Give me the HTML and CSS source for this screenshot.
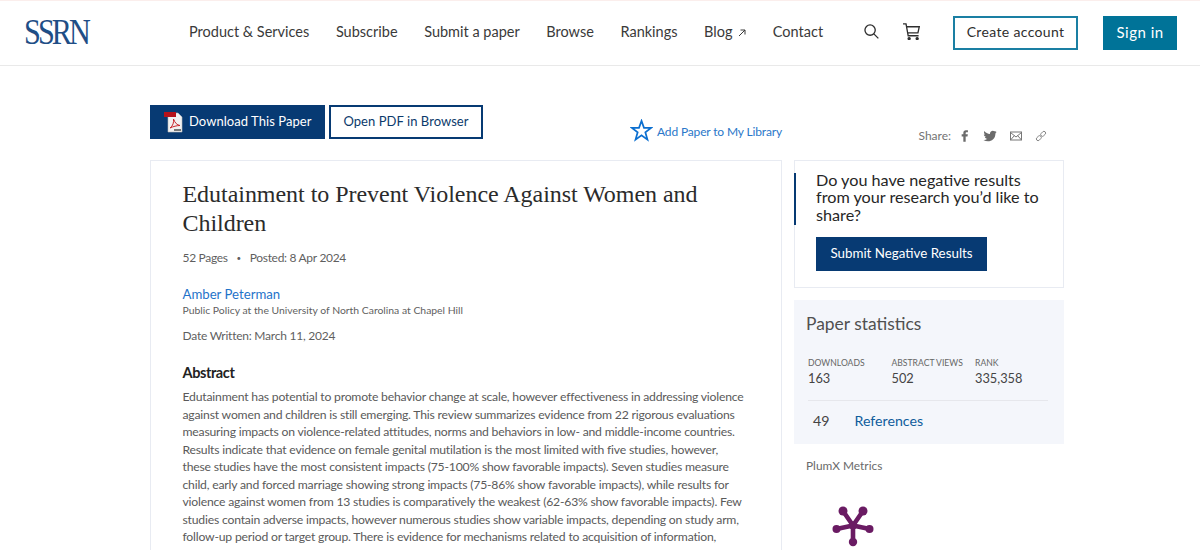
FILE: index.html
```html
<!DOCTYPE html>
<html>
	<head>
		<meta charset="UTF-8">
		<title>Edutainment to Prevent Violence Against Women and Children</title>
		<link rel="stylesheet" href="styles.css">
	</head>
	<body>
		<div class="header">
			<div class="logo"><span>SSRN</span></div>
			<div class="nav">
				<span>Product &amp; Services</span>
				<span>Subscribe</span>
				<span>Submit a paper</span>
				<span>Browse</span>
				<span>Rankings</span>
				<span>Blog <svg class="arrow" viewBox="0 0 8 8"><path d="M1 7L7 1M2.500 1H7V5.500"/></svg></span>
				<span>Contact</span>
			</div>
			<div class="tools">
				<svg class="tool search" viewBox="0 0 16 16"><circle cx="6.500" cy="6.500" r="5.500"/><path d="M10.500 10.500L15.300 15.300"/></svg>
				<svg class="tool cart" viewBox="0 0 18 18"><path d="M0 1H3.200L5.500 13.500H16.500M4 4H17.200L15.800 10.500H5.200"/><circle cx="6.500" cy="16.500" r="1.100"/><circle cx="15" cy="16.500" r="1.100"/></svg>
			</div>
			<div class="btn-create">Create account</div>
			<div class="btn-signin">Sign in</div>
		</div>

		<div class="page">
			<div class="actions">
				<div class="btn-download">
					<svg class="pdf" viewBox="0 0 20 21">
						<path d="M4 1H14L18 5V20H4Z" fill="#f2f2f2" stroke="#bbb" stroke-width=".6"/>
						<rect x="0" y="0" width="12" height="5" fill="#b5121b"/>
						<path d="M6 16C9 14 10 10 9.500 7C11 11 13 13 16 13.500C13 13.500 9 14.500 6 16Z" fill="none" stroke="#c8242b" stroke-width="1"/>
						<rect x="10" y="17" width="7" height="2" fill="#777"/>
					</svg>
					<span>Download This Paper</span>
				</div>
				<div class="btn-open">Open PDF in Browser</div>
				<div class="library">
					<svg class="star" viewBox="0 0 24 24"><path d="M12 2L14.600 9.200H22L16 13.900L18.200 21.500L12 17L5.800 21.500L8 13.900L2 9.200H9.400Z"/></svg>
					<span>Add Paper to My Library</span>
				</div>
				<div class="share">
					<span>Share:</span>
					<svg class="share-icon ico-f" viewBox="0 0 12 16"><path class="solid" d="M4 15V8.500H2V6H4V4.200C4 2 5.200 1 7 1H9.500V3.500H8C7 3.500 6.800 3.900 6.800 4.700V6H9.400L9 8.500H6.800V15Z"/></svg>
					<svg class="share-icon ico-t" viewBox="0 0 16 14"><path class="solid" d="M15.500 2.200C15 2.500 14.400 2.600 13.800 2.700C14.400 2.300 14.900 1.800 15.100 1C14.500 1.400 13.900 1.600 13.200 1.700C11.600 0 8.300 1 8 3.800C8 4.100 8 4.300 8 4.600C5.300 4.500 3 3.200 1.500 1.300C.8 2.700 1.100 4.300 2.500 5.400C2 5.400 1.500 5.200 1 5C1 6.500 2.100 7.700 3.500 8C3 8.100 2.600 8.100 2.100 8C2.500 9.200 3.600 10.100 5 10.200C3.600 11.300 2 11.800 .5 11.600C6 15 14.200 12.500 14.200 4.200C14.700 3.700 15.200 3 15.500 2.200Z"/></svg>
					<svg class="share-icon ico-m line" viewBox="0 0 12 13"><rect x=".5" y="2.500" width="11" height="8"/><path d="M.5 3L6 7.500L11.500 3M.5 10.500L4.500 6M11.500 10.500L7.500 6"/></svg>
					<svg class="share-icon ico-l line" viewBox="0 0 14 14"><rect x="1.200" y="7.500" width="6.500" height="4" rx="2" transform="rotate(-45 4.500 9.500)"/><rect x="6.300" y="2.500" width="6.500" height="4" rx="2" transform="rotate(-45 9.500 4.500)"/></svg>
				</div>
			</div>

			<div class="columns">
				<div class="paper">
					<h1>Edutainment to Prevent Violence Against Women and Children</h1>
					<p class="meta">52 Pages <i>&bull;</i> Posted: 8 Apr 2024</p>
					<a class="author">Amber Peterman</a>
					<p class="affil">Public Policy at the University of North Carolina at Chapel Hill</p>
					<p class="written">Date Written: March 11, 2024</p>
					<h3>Abstract</h3>
					<p class="abstract">Edutainment has potential to promote behavior change at scale, however effectiveness in addressing violence<br>against women and children is still emerging. This review summarizes evidence from 22 rigorous evaluations<br>measuring impacts on violence-related attitudes, norms and behaviors in low- and middle-income countries.<br>Results indicate that evidence on female genital mutilation is the most limited with five studies, however,<br>these studies have the most consistent impacts (75-100% show favorable impacts). Seven studies measure<br>child, early and forced marriage showing strong impacts (75-86% show favorable impacts), while results for<br>violence against women from 13 studies is comparatively the weakest (62-63% show favorable impacts). Few<br>studies contain adverse impacts, however numerous studies show variable impacts, depending on study arm,<br>follow-up period or target group. There is evidence for mechanisms related to acquisition of information,<br>individual attitudes/norms modification and interpersonal discussions. Few interventions measure</p>
				</div>
				<div class="side">
					<div class="promo">
						<div class="promo-bar">
							<div class="promo-text">Do you have negative results from your research you’d like to share?</div>
						</div>
						<div class="btn-submit">Submit Negative Results</div>
					</div>
					<div class="stats">
						<div class="stats-title">Paper statistics</div>
						<div class="stats-row">
							<div class="stat"><span>DOWNLOADS</span>163</div>
							<div class="stat"><span>ABSTRACT VIEWS</span>502</div>
							<div class="stat"><span>RANK</span>335,358</div>
						</div>
						<div class="refs"><b>49</b><a>References</a></div>
					</div>
					<div class="plum">PlumX Metrics</div>
					<svg class="plum-icon" viewBox="0 0 42 42">
						<path d="M21 19.500L11 5M21 19.500L31 5M21 19.500L4.500 23M21 19.500L37.500 23M21 19.500V36"/>
						<circle cx="11" cy="5" r="4.500"/><circle cx="31" cy="5" r="4.500"/><circle cx="4.500" cy="23" r="4"/><circle cx="37.500" cy="23" r="4"/><circle cx="21" cy="36" r="4.200"/><circle cx="21" cy="19.500" r="4"/>
					</svg>
				</div>
			</div>
		</div>
	</body>
</html>
```

FILE: styles.css
```css
html,body{
	height: 550px;
	overflow: hidden;
}
body{
	margin: 0;
	font-family: "Lato","Noto Sans",sans-serif;
	color: #2e2e2e;
	background-color: #fff;
}
h1,h3,p{
	margin: 0;
}
.header{
	display: flex;
	align-items: center;
	height: 64px;
	border-top: 1px solid #fbeeec;
	border-bottom: 1px solid #e9e9e9;
	padding-left: 25px;
	white-space: nowrap;
}
.logo{
	flex: none;
	width: 164px;
	font-family: "Liberation Serif",serif;
	font-size: 36px;
	letter-spacing: -3.500px;
	color: #1f4e86;
	margin-top: -2px;
}
.logo span{
	display: inline-block;
	margin-left: -1px;
	transform: scaleX(.84);
	transform-origin: left;
}
.nav{
	display: flex;
	flex: none;
	gap: 26.600px;
	margin-top: -3px;
	font-size: 14.500px;
	color: #3a3a3a;
}
.arrow{
	width: 8px;
	height: 8px;
	margin-left: 2px;
	fill: none;
	stroke: #3a3a3a;
	stroke-width: 1;
}
.tools{
	display: flex;
	flex: none;
	align-items: center;
	gap: 24px;
	margin-left: 41px;
	margin-top: -4px;
}
.tool{
	flex: none;
	fill: none;
	stroke: #2e2e2e;
	stroke-width: 1.400;
}
.search{
	width: 15px;
	height: 15px;
}
.cart{
	width: 17px;
	height: 17px;
}
.cart circle{
	fill: #2e2e2e;
}
.btn-create{
	flex: none;
	margin-left: 33px;
	width: 121px;
	height: 30px;
	line-height: 28px;
	border: 2px solid #1a7fa3;
	text-align: center;
	font-size: 14px;
	letter-spacing: .35px;
}
.btn-signin{
	flex: none;
	margin-left: 25px;
	width: 74px;
	height: 34px;
	line-height: 32px;
	background-color: #007398;
	color: #fff;
	text-align: center;
	font-size: 15px;
	letter-spacing: .5px;
}
.page{
	width: 914px;
	margin-left: 150px;
}
.actions{
	display: flex;
	align-items: flex-start;
	padding-top: 39px;
	height: 55px;
}
.btn-download{
	display: flex;
	flex: none;
	align-items: center;
	width: 175px;
	height: 34px;
	background-color: #073a73;
	color: #fff;
	font-size: 13px;
	letter-spacing: .05px;
	box-sizing: border-box;
	padding-left: 14px;
	gap: 5px;
}
.btn-download span{
	padding-bottom: 2px;
}
.pdf{
	flex: none;
	width: 20px;
	height: 21px;
}
.btn-open{
	flex: none;
	margin-left: 4px;
	width: 154px;
	height: 34px;
	line-height: 29px;
	box-sizing: border-box;
	border: 2px solid #073a73;
	color: #0c3a6b;
	text-align: center;
	font-size: 13px;
	letter-spacing: .05px;
}
.library{
	display: flex;
	flex: none;
	align-items: center;
	gap: 4px;
	margin-left: 147px;
	margin-top: 14px;
	color: #2a77c9;
	font-size: 12px;
	letter-spacing: -.15px;
	white-space: nowrap;
}
.library span{
	padding-top: 2px;
}
.star{
	flex: none;
	width: 23px;
	height: 23px;
	fill: none;
	stroke: #0b6fd0;
	stroke-width: 1.800;
}
.share{
	display: flex;
	align-items: center;
	margin-left: auto;
	margin-right: 17px;
	margin-top: 23px;
	gap: 13px;
	font-size: 12px;
	color: #737373;
}
.share-icon{
	flex: none;
	height: 14px;
}
.ico-f{
	width: 10px;
	margin-left: -4px;
}
.ico-t{
	width: 14px;
}
.ico-m,.ico-l{
	width: 12px;
}
.solid{
	fill: #6b6b6b;
}
.line{
	fill: none;
	stroke: #777;
	stroke-width: 1;
}
.columns{
	display: flex;
	gap: 12px;
}
.paper{
	width: 632px;
	height: 400px;
	box-sizing: border-box;
	border: 1px solid #e8ebf2;
	padding: 19px 31.500px 0;
	overflow: hidden;
}
h1{
	font-family: "Liberation Serif",serif;
	font-weight: normal;
	font-size: 24px;
	line-height: 29px;
	letter-spacing: -.04px;
	color: #2b2b2b;
	width: 540px;
}
.meta{
	margin-top: 12px;
	font-size: 12px;
	color: #5f5f5f;
	letter-spacing: -.3px;
}
.meta i{
	font-style: normal;
	font-size: 8px;
	margin: 0 6px;
	vertical-align: 1px;
}
.author{
	display: block;
	margin-top: 21px;
	font-size: 13.200px;
	line-height: 16px;
	color: #1f73c9;
}
.affil{
	margin-top: 2px;
	font-size: 10.400px;
	color: #5f5f5f;
}
.written{
	margin-top: 12px;
	font-size: 12px;
	letter-spacing: -.24px;
	color: #5f5f5f;
}
h3{
	margin-top: 20px;
	font-size: 14.500px;
	letter-spacing: -.4px;
	line-height: 20px;
	font-weight: bold;
	color: #222;
}
.abstract{
	margin-top: 5px;
	font-size: 12.200px;
	letter-spacing: -.2px;
	line-height: 17.500px;
	color: #5a5a5a;
	white-space: nowrap;
}
.side{
	flex: none;
	width: 270px;
}
.promo{
	height: 128px;
	box-sizing: border-box;
	border: 1px solid #e8ebf2;
	padding-top: 12px;
}
.promo-bar{
	display: flow-root;
	margin-left: -1px;
	border-left: 2px solid #073a73;
	padding-left: 20px;
	padding-right: 14px;
}
.promo-text{
	margin: -2px 0 2px;
	font-size: 16.200px;
	line-height: 17.300px;
	color: #262626;
}
.btn-submit{
	margin: 12px 0 0 21px;
	width: 171px;
	height: 34px;
	line-height: 33px;
	background-color: #073a73;
	color: #fff;
	text-align: center;
	font-size: 13.350px;
}
.stats{
	margin-top: 12px;
	height: 144px;
	box-sizing: border-box;
	background-color: #f4f6fb;
	padding: 12px 16px 0 12px;
}
.stats-title{
	font-size: 17.400px;
	line-height: 24px;
	color: #505050;
}
.stats-row{
	display: flex;
	margin: 20px 0 0 2px;
	padding-bottom: 14px;
	border-bottom: 1px solid #e6e7ec;
	font-size: 12.800px;
	line-height: 16px;
	color: #444;
}
.stat{
	flex: none;
	width: 83.500px;
}
.stat span{
	display: block;
	font-size: 8.600px;
	line-height: 14px;
	color: #666;
}
.refs{
	display: flex;
	gap: 25px;
	margin-top: 10px;
	padding-left: 7px;
	font-size: 14.200px;
	line-height: 20px;
}
.refs b{
	font-weight: normal;
	color: #444;
}
.refs a{
	color: #0f5c9c;
}
.plum{
	margin: 14px 0 0 12px;
	font-size: 11.900px;
	line-height: 16px;
	color: #6a6a6a;
}
.plum-icon{
	display: block;
	width: 42px;
	height: 42px;
	margin: 32px 0 0 38px;
	fill: #6a1b63;
}
.plum-icon path{
	fill: none;
	stroke: #6a1b63;
	stroke-width: 4.600;
}
```
